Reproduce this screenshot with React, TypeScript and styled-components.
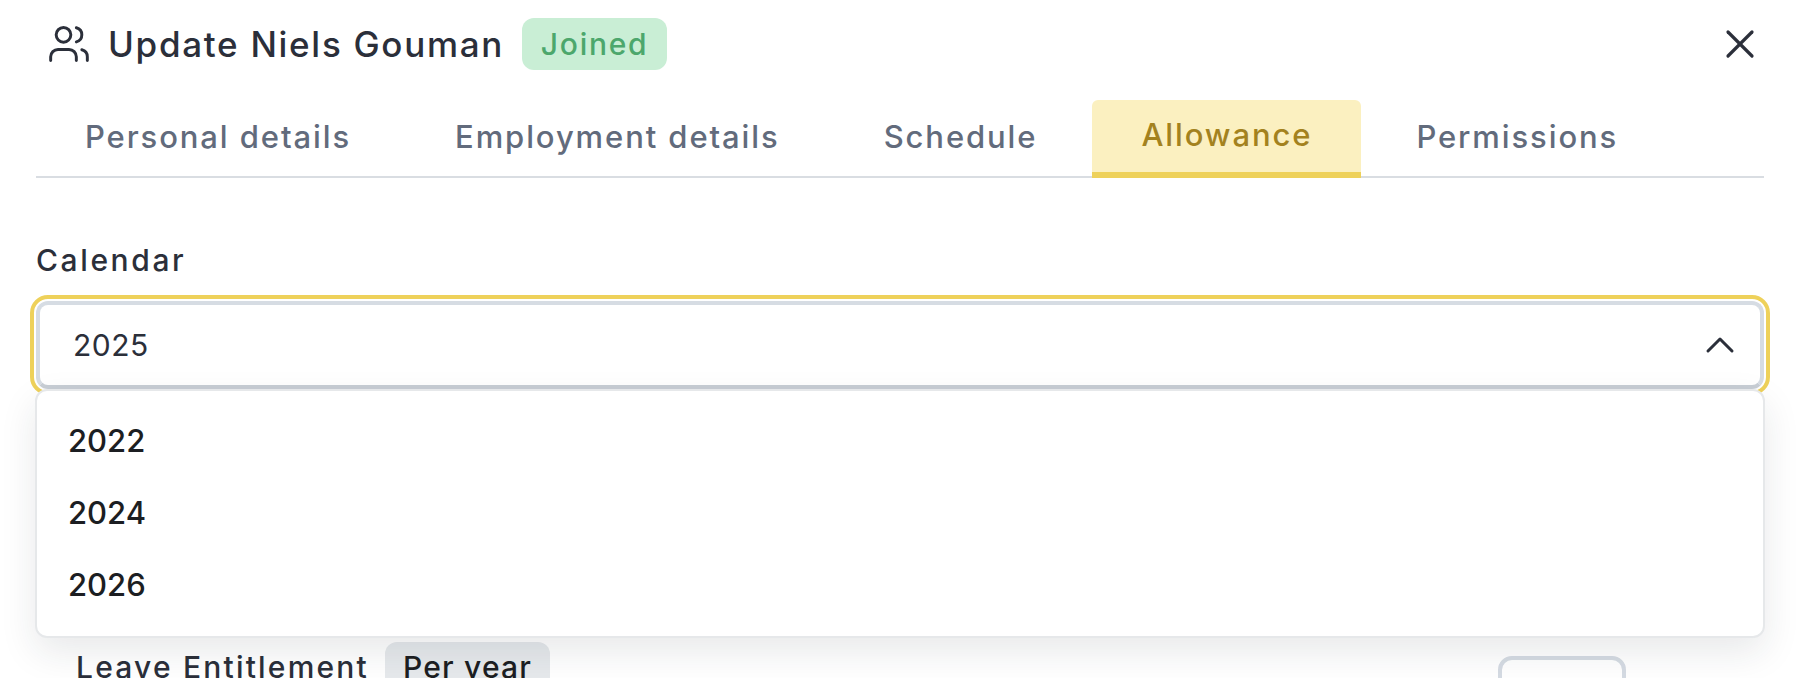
import React from 'react'
import styled, { createGlobalStyle } from 'styled-components'
import { ChevronUp, Users, X } from 'lucide-react'

const GlobalStyle = createGlobalStyle`
  html, body {
    margin: 0;
    height: 678px;
    background: #ffffff;
    overflow: hidden;
  }
  body {
    font-family: Inter, "Open Sans", sans-serif;
  }
`

const Page = styled.div`
  display: flex;
  flex-direction: column;
  padding: 0 44px 0 36px;
  box-sizing: border-box;
`

const Header = styled.header`
  display: flex;
  align-items: center;
  height: 88px;
  padding: 0 0 0 11px;
  color: #2b2f3a;
`

const Title = styled.h1`
  margin: 0 0 0 17px;
  font-size: 35px;
  font-weight: 500;
  letter-spacing: 1.7px;
  white-space: nowrap;
`

const Badge = styled.span`
  display: flex;
  align-items: center;
  justify-content: center;
  width: 145px;
  height: 52px;
  margin-left: 18px;
  border-radius: 12px;
  background: #c9eed5;
  color: #4ca76c;
  font-size: 30px;
  font-weight: 500;
  letter-spacing: 1.7px;
`

const CloseButton = styled.button`
  display: flex;
  margin-left: auto;
  padding: 0;
  border: 0;
  background: none;
  color: #2b2f3a;
`

const Tabs = styled.nav`
  display: flex;
  gap: 6px;
  height: 90px;
  padding-top: 12px;
  box-sizing: border-box;
  border-bottom: 2px solid #d9dde2;
`

const Tab = styled.div<{ $active?: boolean }>`
  display: flex;
  align-items: center;
  height: 78px;
  padding: ${props => (props.$active ? '0 49px 4px' : '0 49px')};
  box-sizing: border-box;
  border-radius: 6px 6px 0 0;
  border-bottom: 6px solid ${props => (props.$active ? '#eed15a' : 'transparent')};
  background: ${props => (props.$active ? '#fbf0c0' : 'transparent')};
  color: ${props => (props.$active ? '#a3821e' : '#626b7c')};
  font-size: 31px;
  font-weight: 500;
  letter-spacing: 1.9px;
  white-space: nowrap;
`

const Field = styled.div`
  position: relative;
  display: flex;
  flex-direction: column;
  margin-top: 60px;
`

const Label = styled.label`
  color: #2b2f3a;
  font-size: 30px;
  font-weight: 500;
  line-height: 44px;
  letter-spacing: 2.6px;
`

const Select = styled.div`
  display: flex;
  align-items: center;
  justify-content: space-between;
  height: 88px;
  margin-top: 19px;
  padding: 0 16px 0 33px;
  box-sizing: border-box;
  border: 4px solid #d6dce3;
  border-bottom-color: #c8ced5;
  border-radius: 12px;
  outline: 4px solid #eed15a;
  outline-offset: 2px;
  color: #2b2f3a;
  font-size: 30px;
  letter-spacing: 0.5px;
`

const Menu = styled.ul`
  position: absolute;
  top: 151px;
  left: -1px;
  right: -1px;
  z-index: 2;
  display: flex;
  flex-direction: column;
  height: 249px;
  margin: 0;
  padding: 13px 0 0;
  box-sizing: border-box;
  list-style: none;
  background: #ffffff;
  border: 2px solid #e6e8ea;
  border-radius: 12px;
  box-shadow: 0 14px 36px rgba(30, 40, 50, 0.1);
`

const MenuItem = styled.li`
  display: flex;
  align-items: center;
  height: 72px;
  padding-left: 31px;
  color: #1c1e22;
  font-size: 31px;
  font-weight: 500;
`

const Row = styled.div`
  display: flex;
  align-items: flex-start;
  margin-top: 253px;
  padding-left: 40px;
`

const RowLabel = styled.span`
  color: #2b2f3a;
  font-size: 30px;
  font-weight: 500;
  line-height: 50px;
  letter-spacing: 2.2px;
  white-space: nowrap;
`

const Chip = styled.span`
  height: 60px;
  margin-left: 16px;
  padding: 0 18px;
  border-radius: 12px;
  background: #e6e9ec;
  color: #1c1e22;
  font-size: 30px;
  font-weight: 500;
  line-height: 50px;
  letter-spacing: 1.2px;
  white-space: nowrap;
`

const SmallInput = styled.div`
  width: 128px;
  height: 60px;
  margin: 14px 138px 0 auto;
  box-sizing: border-box;
  border: 4px solid #d5dbe3;
  border-radius: 14px;
`

const tabs = ['Personal details', 'Employment details', 'Schedule', 'Allowance', 'Permissions']
const years = ['2022', '2024', '2026']

export default function App() {
  return (
    <Page>
      <GlobalStyle />
      <Header>
        <Users size={44} strokeWidth={1.6} />
        <Title>Update Niels Gouman</Title>
        <Badge>Joined</Badge>
        <CloseButton aria-label="Close">
          <X size={48} strokeWidth={1.6} />
        </CloseButton>
      </Header>
      <Tabs>
        {tabs.map(tab => (
          <Tab key={tab} $active={tab === 'Allowance'}>{tab}</Tab>
        ))}
      </Tabs>
      <Field>
        <Label>Calendar</Label>
        <Select>
          2025
          <ChevronUp size={48} strokeWidth={1.5} />
        </Select>
        <Menu>
          {years.map(year => (
            <MenuItem key={year}>{year}</MenuItem>
          ))}
        </Menu>
      </Field>
      <Row>
        <RowLabel>Leave Entitlement</RowLabel>
        <Chip>Per year</Chip>
        <SmallInput />
      </Row>
    </Page>
  )
}
